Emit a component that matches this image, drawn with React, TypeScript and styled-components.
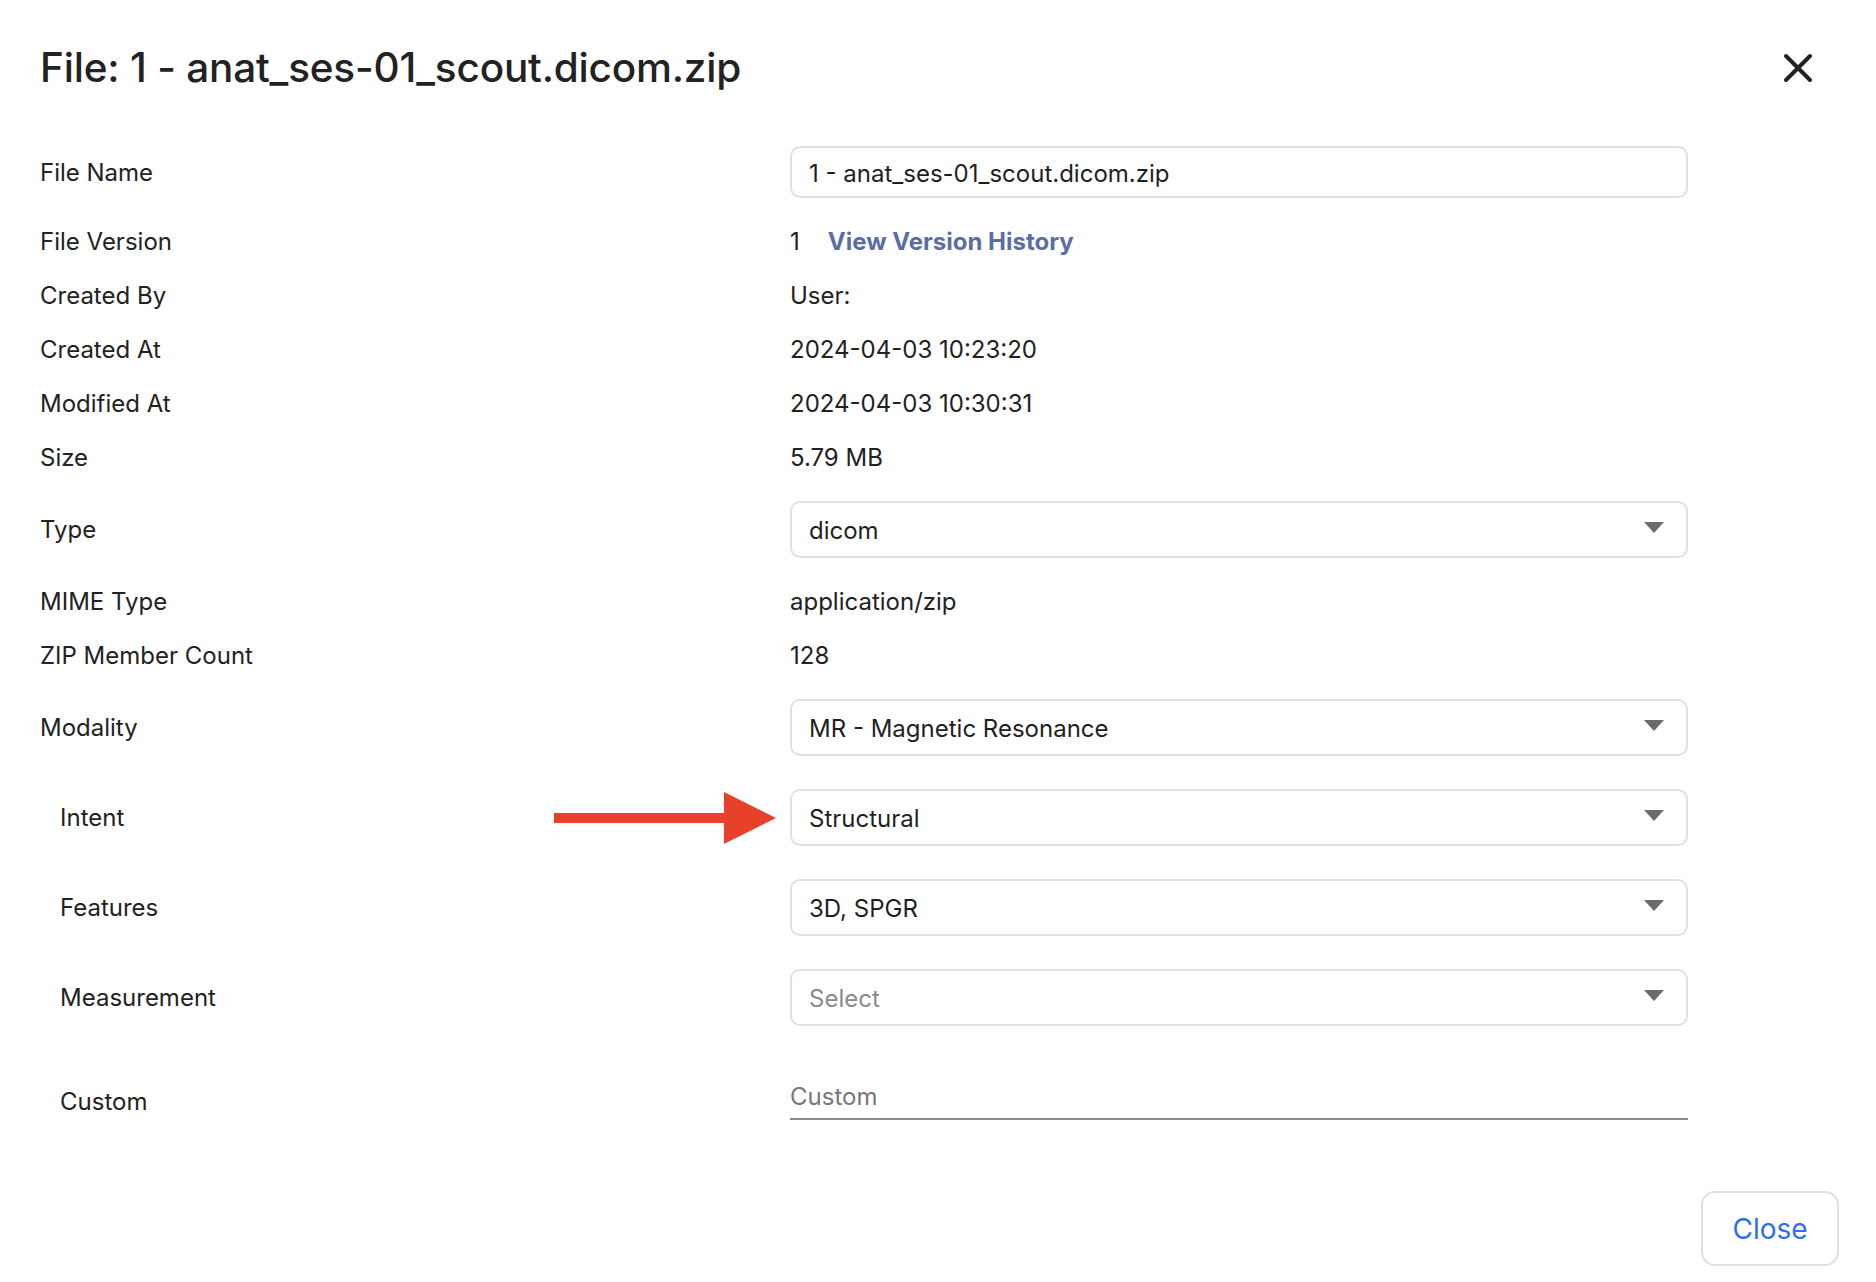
import React from "react";
import styled, { createGlobalStyle } from "styled-components";

const Global = createGlobalStyle`
  html, body { margin: 0; padding: 0; background: #fff; }
  body { font-family: Inter, "Noto Sans", "Liberation Sans", sans-serif; color: #1f1f1f; }
  * { box-sizing: border-box; }
`;

const Dialog = styled.div`
  width: 1876px;
  height: 1282px;
  display: flex;
  flex-direction: column;
  background: #fff;
`;

const Header = styled.div`
  height: 130px;
  display: flex;
  align-items: flex-start;
  justify-content: space-between;
  padding: 43px 61px 0 40px;
`;

const Title = styled.h1`
  margin: 0;
  font-size: 40.5px;
  font-weight: 500;
  color: #222;
  line-height: 50px;
  letter-spacing: -0.2px;
`;

const CloseX = styled.button`
  width: 34px;
  height: 34px;
  margin-top: 8px;
  border: 0;
  padding: 0;
  background: transparent;
  display: flex;
  align-items: center;
  justify-content: center;
  cursor: pointer;
`;

const Form = styled.div`
  display: flex;
  flex-direction: column;
`;

const Row = styled.div<{ $h: number; $indent?: boolean }>`
  position: relative;
  height: ${(p) => p.$h}px;
  display: flex;
  align-items: center;
  padding-left: ${(p) => (p.$indent ? 60 : 40)}px;
`;

const Label = styled.div<{ $indent?: boolean }>`
  width: ${(p) => (p.$indent ? 730 : 750)}px;
  flex: none;
  font-size: 24px;
  color: #222;
`;

const Value = styled.div`
  font-size: 24px;
  color: #222;
  display: flex;
  align-items: center;
`;

const Link = styled.a`
  margin-left: 28px;
  font-weight: 700;
  color: #5a6ea4;
  text-decoration: none;
  cursor: pointer;
`;

const TextBox = styled.div`
  width: 898px;
  height: 52px;
  border: 2px solid #e0e0e0;
  border-radius: 10px;
  padding: 2px 17px 0;
  display: flex;
  align-items: center;
  font-size: 24px;
  color: #1f1f1f;
`;

const SelectBox = styled.div<{ $placeholder?: boolean }>`
  width: 898px;
  height: 57px;
  border: 2px solid #e0e0e0;
  border-radius: 10px;
  padding: 2px 22px 0 17px;
  display: flex;
  align-items: center;
  justify-content: space-between;
  font-size: 24px;
  color: ${(p) => (p.$placeholder ? "#8a8a8a" : "#1f1f1f")};
`;

const Caret = styled.span`
  width: 0;
  height: 0;
  border-left: 10.5px solid transparent;
  border-right: 10.5px solid transparent;
  border-top: 11px solid #6b6b6b;
  margin-top: -6px;
`;

const Underline = styled.div`
  width: 898px;
  height: 46px;
  margin-bottom: 8px;
  border-bottom: 2px solid #8c8c8c;
  display: flex;
  align-items: center;
  font-size: 24px;
  color: #777;
`;

const Arrow = styled.svg`
  position: absolute;
  left: 554px;
  top: 50%;
  margin-top: -25px;
`;

const Footer = styled.div`
  flex: 1;
  display: flex;
  justify-content: flex-end;
  align-items: flex-start;
  padding: 31px 37px 0 0;
`;

const CloseButton = styled.button`
  width: 138px;
  height: 75px;
  border: 2px solid #e0e0e0;
  border-radius: 14px;
  background: #fff;
  font-family: inherit;
  font-size: 28px;
  color: #2f6df0;
  cursor: pointer;
`;

const Select: React.FC<{ value: string; placeholder?: boolean }> = ({ value, placeholder }) => (
  <SelectBox $placeholder={placeholder}>
    <span>{value}</span>
    <Caret />
  </SelectBox>
);

export default function App() {
  return (
    <>
      <Global />
      <Dialog>
        <Header>
          <Title>File: 1 - anat_ses-01_scout.dicom.zip</Title>
          <CloseX aria-label="close">
            <svg width="30" height="30" viewBox="0 0 30 30">
              <path d="M3 3 L27 27 M27 3 L3 27" stroke="#222" strokeWidth="4" strokeLinecap="round" />
            </svg>
          </CloseX>
        </Header>
        <Form>
          <Row $h={84}>
            <Label>File Name</Label>
            <TextBox>1 - anat_ses-01_scout.dicom.zip</TextBox>
          </Row>
          <Row $h={54}>
            <Label>File Version</Label>
            <Value>
              1<Link>View Version History</Link>
            </Value>
          </Row>
          <Row $h={54}>
            <Label>Created By</Label>
            <Value>User:</Value>
          </Row>
          <Row $h={54}>
            <Label>Created At</Label>
            <Value>2024-04-03 10:23:20</Value>
          </Row>
          <Row $h={54}>
            <Label>Modified At</Label>
            <Value>2024-04-03 10:30:31</Value>
          </Row>
          <Row $h={54}>
            <Label>Size</Label>
            <Value>5.79 MB</Value>
          </Row>
          <Row $h={90}>
            <Label>Type</Label>
            <Select value="dicom" />
          </Row>
          <Row $h={54}>
            <Label>MIME Type</Label>
            <Value>application/zip</Value>
          </Row>
          <Row $h={54}>
            <Label>ZIP Member Count</Label>
            <Value>128</Value>
          </Row>
          <Row $h={90}>
            <Label>Modality</Label>
            <Select value="MR - Magnetic Resonance" />
          </Row>
          <Row $h={90} $indent>
            <Label $indent>Intent</Label>
            <Select value="Structural" />
            <Arrow width="222" height="52" viewBox="0 0 222 52">
              <rect x="0" y="21" width="172" height="10" fill="#e8412a" />
              <polygon points="170,0 222,26 170,52" fill="#e8412a" />
            </Arrow>
          </Row>
          <Row $h={90} $indent>
            <Label $indent>Features</Label>
            <Select value="3D, SPGR" />
          </Row>
          <Row $h={90} $indent>
            <Label $indent>Measurement</Label>
            <Select value="Select" placeholder />
          </Row>
          <Row $h={118} $indent>
            <Label $indent>Custom</Label>
            <Underline>Custom</Underline>
          </Row>
        </Form>
        <Footer>
          <CloseButton>Close</CloseButton>
        </Footer>
      </Dialog>
    </>
  );
}
